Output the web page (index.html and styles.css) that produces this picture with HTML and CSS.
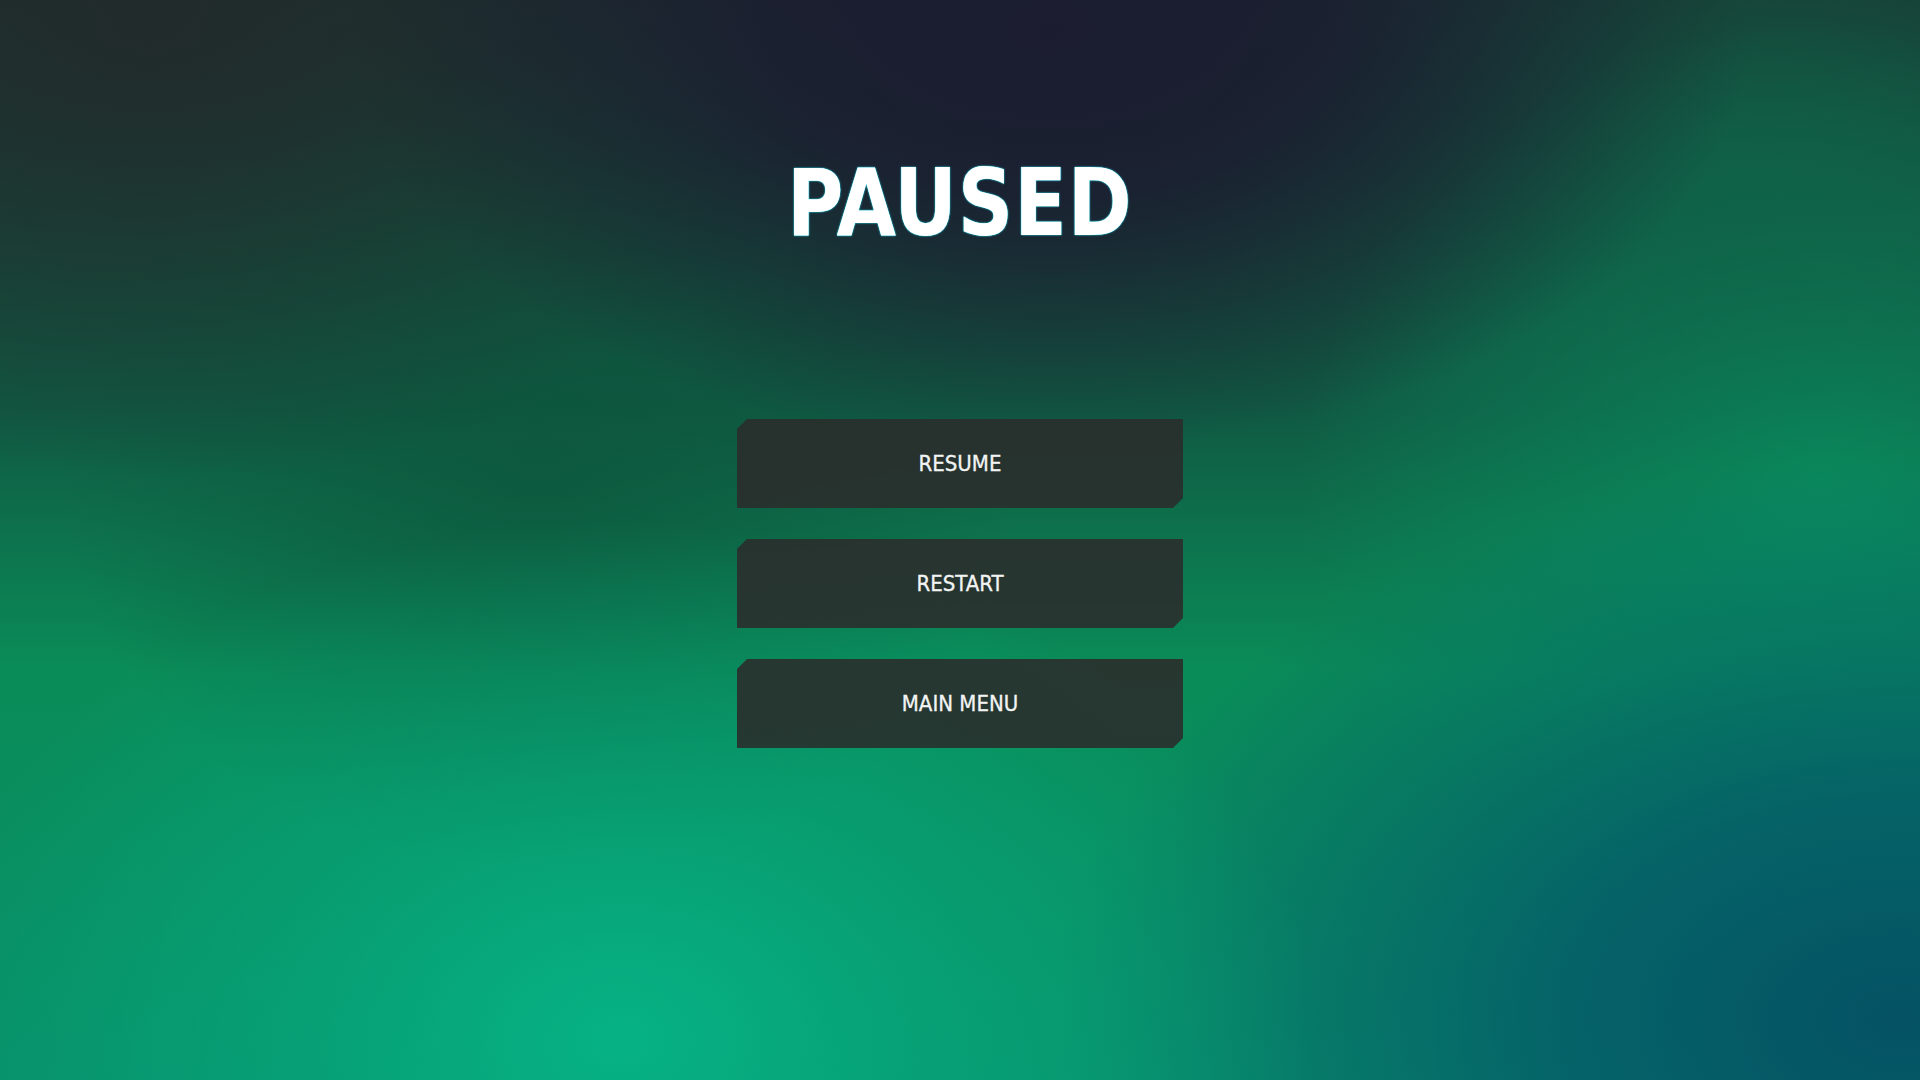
FILE: index.html
```html
<!DOCTYPE html>
<html>
<head>
<meta charset="utf-8">
<link rel="stylesheet" href="styles.css">
</head>
<body>
<main class="pause">
  <h1 class="title">PAUSED</h1>
  <nav class="menu">
    <button class="btn">RESUME</button>
    <button class="btn">RESTART</button>
    <button class="btn">MAIN MENU</button>
  </nav>
</main>
</body>
</html>
```
FILE: styles.css
```css
html, body {
  margin: 0;
  width: 1920px;
  height: 1080px;
  overflow: hidden;
}
body {
  font-family: "DejaVu Sans Condensed", "DejaVu Sans", sans-serif;
  background:
    radial-gradient(ellipse 700px 420px at 1050px 30px, rgba(27,28,48,1) 0%, rgba(27,28,48,0.85) 40%, rgba(27,28,48,0) 100%),
    radial-gradient(ellipse 700px 450px at 150px 30px, rgba(34,42,42,0.9) 0%, rgba(34,42,42,0) 100%),
    radial-gradient(ellipse 560px 380px at 1750px 180px, rgba(14,100,72,0.75) 0%, rgba(14,100,72,0) 100%),
    radial-gradient(ellipse 700px 520px at 620px 1040px, rgba(6,178,132,1) 0%, rgba(6,170,125,0.6) 45%, rgba(6,170,125,0) 100%),
    radial-gradient(ellipse 850px 560px at 1900px 1020px, rgba(4,82,100,1) 0%, rgba(4,88,104,0.8) 40%, rgba(4,100,108,0) 100%),
    radial-gradient(ellipse 520px 460px at 1820px 480px, rgba(8,150,100,0.85) 0%, rgba(8,150,100,0) 100%),
    radial-gradient(ellipse 480px 400px at 540px 470px, rgba(12,85,60,0.75) 0%, rgba(12,85,60,0) 100%),
    linear-gradient(180deg, #1b3330 0%, #105a43 38%, #0a8c58 62%, #08906a 100%);
}
.pause {
  display: flex;
  flex-direction: column;
  align-items: center;
  padding-top: 151px;
}
.title {
  margin: 0;
  font-family: "DejaVu Sans Condensed", "DejaVu Sans", sans-serif;
  font-weight: 700;
  font-size: 93px;
  line-height: 104px;
  letter-spacing: 1px;
  color: #ffffff;
  transform: scaleX(0.92);
  text-shadow: 0 0 1px #40f0ff, 0 0 2px #20e0ff;
}
.menu {
  margin-top: 164px;
  display: flex;
  flex-direction: column;
  gap: 31px;
}
.btn {
  width: 446px;
  height: 89px;
  border: 0;
  padding: 0;
  background: rgba(42, 46, 44, 0.9);
  color: #f2f4f3;
  font-family: "DejaVu Sans Condensed", "DejaVu Sans", sans-serif;
  font-size: 22px;
  letter-spacing: 0;
  -webkit-text-stroke: 0.3px #f2f4f3;
  clip-path: polygon(10px 0, 100% 0, 100% calc(100% - 10px), calc(100% - 10px) 100%, 0 100%, 0 10px);
  cursor: pointer;
}
```
